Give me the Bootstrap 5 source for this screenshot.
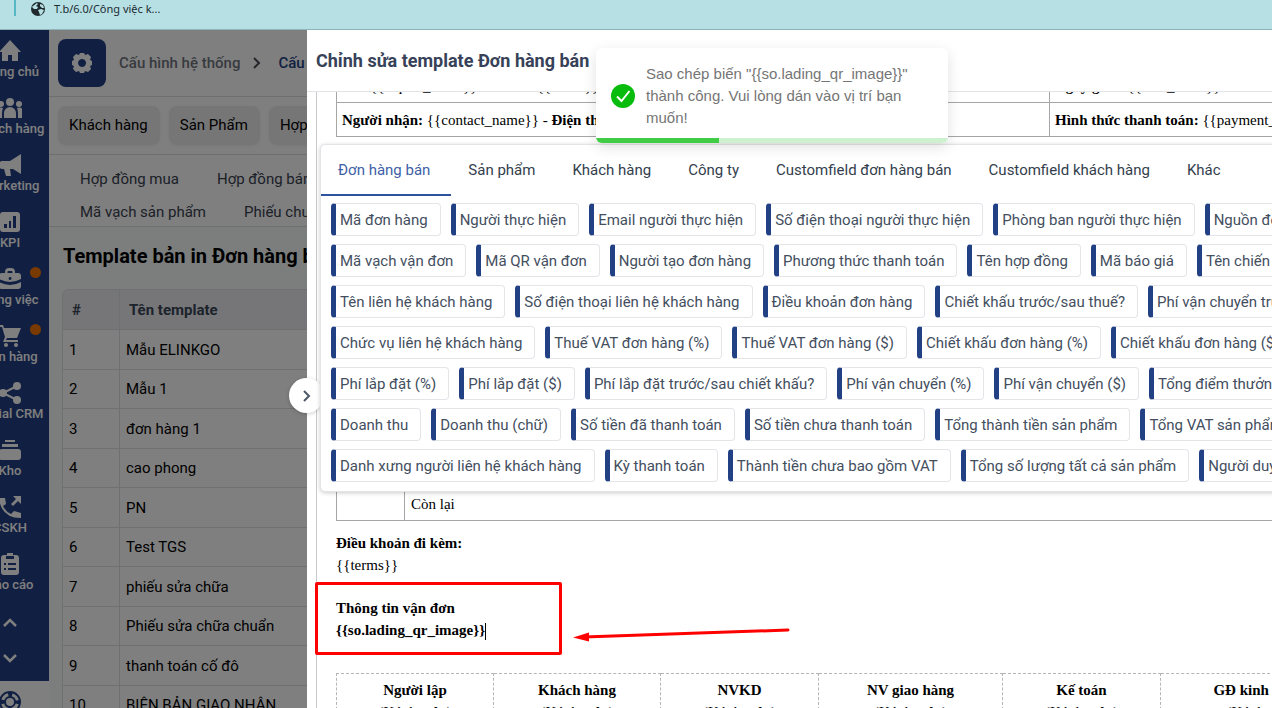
<!DOCTYPE html>
<html lang="vi">
<head>
<meta charset="utf-8">
<meta name="viewport" content="width=device-width, initial-scale=1">
<title>Chỉnh sửa template Đơn hàng bán</title>
<link href="https://cdn.jsdelivr.net/npm/bootstrap@5.3.0/dist/css/bootstrap.min.css" rel="stylesheet">
<style>
  :root { --navy: #224084; }
  body { font-family: Roboto, "Noto Sans", sans-serif; font-size: 15px; line-height: 22px; color: #000; }
  a { text-decoration: none; color: inherit; }
  .bookmarks { height: 30px; background: #b6e0e4; border-bottom: 1px solid #8fb3b8; font: 11px/18px "Noto Sans", sans-serif; color: #1b2a30; padding-left: 14px; gap: 14px; }
  .bookmarks .sep { width: 2px; height: 16px; background: #57b8c4; }
  .app { background: #f8fbfa; }

  .rail { width: 49px; }
  .rail-inner { width: 78px; }
  .rail-menu { background: var(--navy); color: #fff; padding-top: 9px; padding-bottom: 10px; }
  .rail-item { height: 57px; font-size: 13px; line-height: 18px; font-weight: 500; }
  .rail-item svg { width: 24px; height: 24px; fill: currentColor; }
  .rail-item .dot { position: absolute; right: 8px; top: 0; width: 11px; height: 11px; border-radius: 50%; background: #f07400; }
  .rail-arrows { gap: 8px; }
  .rail-btn { height: 27px; border: 0; background: none; color: #fff; padding: 0; line-height: 16px; }
  .rail-foot { padding-top: 9px; }

  .crumbs { height: 67px; padding: 0 9px; gap: 13px; font-size: 15px; font-weight: 500; color: #70757f; border-bottom: 1px solid #dcdee2; background: #fff; }
  .crumbs .here { color: var(--navy); }
  .gear { width: 48px; height: 48px; border-radius: 8px; background: var(--navy); }
  .pills { height: 58px; padding: 0 9px; gap: 9px; border-bottom: 1px solid #dcdee2; background: #fff; }
  .pill { height: 39px; border-radius: 8px; background: #ececec; padding: 0 12px 0 11px; font-size: 15px; line-height: 39px; border: 0; box-shadow: 0 1px 4px rgba(0,0,0,.06); }
  .submenu { height: 72px; padding: 8px 31px; border-bottom: 1px solid #dcdee2; background: #fff; color: #38414f; line-height: 33px; }
  .submenu > div { gap: 38px; }
  .page-title { font-size: 20px; line-height: 24px; font-weight: 700; margin: 17px 14px 21px 14px; }
  .list { margin-left: 13px; width: 600px; border-collapse: separate; border-spacing: 0; background: #fff; }
  .list th, .list td { border-bottom: 1px solid #dfe1e5; border-left: 1px solid #dfe1e5; padding: 0 6px; height: 40px; }
  .list th { background: #ecedf2; color: #3a4656; padding: 0 9px; border-top: 1px solid #dfe1e5; height: 41px; }
  .list th:first-child { border-top-left-radius: 6px; width: 57px; }
  .list tbody tr:nth-child(even) td { height: 39px; }

  .dim { position: absolute; inset: 30px 0 0 0; background: rgba(0,0,0,.5); }
  .drawer { position: absolute; top: 30px; right: 0; bottom: 0; left: 307px; background: #fff; }
  .drawer-head { height: 62px; padding-left: 9px; border-bottom: 1px solid #e2e4e8; }
  .drawer-head h2 { font-size: 18px; line-height: 24px; font-weight: 700; color: #374258; }
  .collapse-btn { position: absolute; left: -18px; top: 348px; width: 35px; height: 35px; border-radius: 50%; background: #fff; border: 0; box-shadow: 0 1px 4px rgba(0,0,0,.2); padding: 0; line-height: 14px; z-index: 1; }
  .doc { margin-left: 9px; border-left: 1px solid #c8cacd; padding-left: 19px; font: 15px/22px "Liberation Serif", serif; color: #000; }
  .doc table { width: 1130px; table-layout: fixed; border-collapse: collapse; }
  .info { margin-top: -24px; }
  .info td { height: 34px; border: 1px solid #a6a6a6; padding: 0 5px; }
  .goods { margin-top: 20px; }
  .goods td { border: 1px solid #a6a6a6; padding: 0 6px; height: 33px; }
  .goods .tall td { height: 330px; }
  .terms { margin-top: 11px; }
  .lading { margin-top: 21px; }
  .sign { margin-top: 32px; }
  .doc .sign { width: 1030px; }
  .sign td { border: 1px dashed #b5b5b5; padding: 5px 0; text-align: center; }
  .caret { display: inline-block; width: 1px; height: 17px; background: #000; vertical-align: middle; }

  .vars { position: absolute; left: 13px; top: 114px; width: 1100px; height: 348px; background: #fff; border: 1px solid #e2e4e8; border-radius: 5px; box-shadow: 0 1px 4px rgba(0,0,0,.2); z-index: 3; }
  .vars .tab { height: 51px; border: 0; border-bottom: 2px solid transparent; background: none; padding: 0 20px 0 17px; color: #333e4d; }
  .vars .tab.on { color: #3e5fa6; border-bottom-color: #2d529e; padding-right: 21px; }
  .chips { padding: 7px 10px; gap: 8px; }
  .chips > div { gap: 10px; }
  .chip { height: 33px; border: 1px solid #e3e5e9; border-left: 5px solid var(--navy); border-radius: 4px; background: #fff; color: #434e5e; padding: 0 12px 0 4px; }

  .note { position: absolute; z-index: 5; left: 596px; top: 48px; width: 352px; background: #fff; border-radius: 6px; box-shadow: 0 4px 14px rgba(0,0,0,.12); font: 15px/22px "Liberation Sans", sans-serif; color: #757575; }
  .note-text { gap: 11px; padding: 15px 20px 9px 15px; }
  .note-bar { height: 5px; background: #cdf1cf; }
  .note-bar div { height: 5px; background: #40cc44; }
  .mark-box { position: absolute; z-index: 4; left: 315px; top: 582px; width: 247px; height: 73px; border: 3px solid #f00; border-radius: 2px; }
  .mark-arrow { position: absolute; left: 572px; top: 624px; }
</style>
</head>
<body class="vh-100 overflow-hidden d-flex flex-column position-relative">

<header class="bookmarks d-flex flex-shrink-0">
  <span class="sep"></span>
  <a href="#" class="d-flex gap-2"><svg width="16" height="18" viewBox="0 0 16 18"><circle cx="8" cy="9" r="7" fill="#202a2e"/><path d="M3 6l4-3 1 1-2 2 2 1-1 2-3 0-2-2zM8 10l3-1 3 1-2 4-2 1-1-3zM10 4l3 1 1 3-2 0-2-2z" fill="#b6e0e4"/></svg><span>T.b/6.0/Công việc k...</span></a>
</header>

<div class="app d-flex flex-grow-1 overflow-hidden">
  <nav class="rail d-flex justify-content-end flex-shrink-0 overflow-hidden bg-white">
    <div class="rail-inner flex-shrink-0 text-center">
      <div class="rail-menu d-flex flex-column">
        <a href="#" class="rail-item"><svg viewBox="0 0 24 24"><path d="M10 22v-6h4v6h6v-9h3L12 1 1 13h3v9z"/></svg><div>Trang chủ</div></a>
        <a href="#" class="rail-item"><svg viewBox="0 0 24 24"><circle cx="12" cy="6" r="4"/><circle cx="3" cy="8" r="3"/><circle cx="21" cy="8" r="3"/><path d="M6 22v-5a6 6 0 0 1 12 0v5zM-1 22v-7a4 4 0 0 1 6-3Q4 14 4 17v5zM25 22v-7a4 4 0 0 0-6-3Q20 14 20 17v5z"/></svg><div>Khách hàng</div></a>
        <a href="#" class="rail-item"><svg viewBox="0 0 24 24"><path d="M23 1v20l-8-5h-3l1 7H8l-2-7H4a4 4 0 0 1-3-4c0-2 1-4 3-4h8z"/></svg><div>Marketing</div></a>
        <a href="#" class="rail-item"><svg viewBox="0 0 24 24"><path fill-rule="evenodd" d="M5 2h14a3 3 0 0 1 3 3v14a3 3 0 0 1-3 3H5a3 3 0 0 1-3-3V5a3 3 0 0 1 3-3zM6 14v4h3v-4zm5-3v7h2v-7zM15 6v12h3V6z"/></svg><div>KPI</div></a>
        <a href="#" class="rail-item position-relative"><svg viewBox="0 0 24 24"><path fill-rule="evenodd" d="M7 6V5a4 4 0 0 1 4-4h2a4 4 0 0 1 4 4v1h3a3 3 0 0 1 3 3v3q-11 6-22 0V9a3 3 0 0 1 3-3zm2.500 0h5V5q0-1-1-1h-3q-1 0-1 1zM12 10a1.500 1.500 0 1 0 .1 3 1.500 1.500 0 0 0-.1-3zM1 15q11 6 22 0v4a3 3 0 0 1-3 3H4a3 3 0 0 1-3-3z"/></svg><span class="dot"></span><div>Công việc</div></a>
        <a href="#" class="rail-item position-relative"><svg viewBox="0 0 24 24"><circle cx="8" cy="21" r="2"/><circle cx="18" cy="21" r="2"/><path d="M1 1h4l1 3h17l-4 10H9l-1 2h12v2H5l2-5-3-10H1z"/></svg><span class="dot"></span><div>Đơn hàng</div></a>
        <a href="#" class="rail-item"><svg viewBox="0 0 24 24"><path d="M19 5L5 12l14 7" fill="none" stroke="currentColor" stroke-width="2"/><circle cx="19" cy="5" r="4"/><circle cx="5" cy="12" r="4"/><circle cx="19" cy="19" r="4"/></svg><div>Social CRM</div></a>
        <a href="#" class="rail-item"><svg viewBox="0 0 24 24"><path d="M7 2h10v2H7zM4 6h16v3H4zM4 11h16a3 3 0 0 1 3 3v5a3 3 0 0 1-3 3H4a3 3 0 0 1-3-3v-5a3 3 0 0 1 3-3z"/></svg><div>Kho</div></a>
        <a href="#" class="rail-item"><svg viewBox="0 0 24 24"><path d="M1 3h6l1 6-3 2q3 6 8 8l3-3 7 2v5Q3 23 1 3zM15 1h8v8l-3-3-5 5-2-2 5-5z"/></svg><div>CSKH</div></a>
        <a href="#" class="rail-item"><svg viewBox="0 0 24 24"><path fill-rule="evenodd" d="M9 3V1h6v2h3a3 3 0 0 1 3 3v14a3 3 0 0 1-3 3H6a3 3 0 0 1-3-3V6a3 3 0 0 1 3-3zM8 4v3h8V4zM6 11v2h2v-2zm4 0v2h8v-2zM6 16v2h2v-2zm4 0v2h8v-2z"/></svg><div>Báo cáo</div></a>
        <div class="rail-arrows d-flex flex-column">
          <button class="rail-btn" aria-label="Lên"><svg width="16" height="16" viewBox="0 0 16 16"><path d="M2 11l6-6 6 6" fill="none" stroke="currentColor" stroke-width="2.500"/></svg></button>
          <button class="rail-btn" aria-label="Xuống"><svg width="16" height="16" viewBox="0 0 16 16"><path d="M2 5l6 6 6-6" fill="none" stroke="currentColor" stroke-width="2.500"/></svg></button>
        </div>
      </div>
      <div class="rail-foot"><svg width="24" height="24" viewBox="0 0 24 24" fill="none" stroke="#224084"><circle cx="12" cy="12" r="7.500" stroke-width="7"/><circle cx="12" cy="12" r="7.500" stroke="#fff" stroke-width="3" stroke-dasharray="7.780 4" stroke-dashoffset="-2"/></svg></div>
    </div>
  </nav>

  <main class="flex-grow-1 overflow-hidden">
    <div class="crumbs d-flex align-items-center text-nowrap">
      <span class="gear d-flex align-items-center justify-content-center"><svg width="24" height="24" viewBox="0 0 24 24" fill="#fff"><path fill-rule="evenodd" d="M10 2h4l1 2 3-1 3 3-1 3 2 1v4l-2 1 1 3-3 3-3-1-1 2h-4l-1-2-3 1-3-3 1-3-2-1v-4l2-1-1-3 3-3 3 1zM12 8a4 4 0 1 0 .1 0z"/></svg></span>
      <a href="#">Cấu hình hệ thống</a>
      <svg width="8" height="12" viewBox="0 0 8 12"><path d="M1 1l5 5-5 5" fill="none" stroke="#4a4f58" stroke-width="2"/></svg>
      <a href="#" class="ms-1 here">Cấu hình chung</a>
    </div>
    <div class="pills d-flex align-items-center text-nowrap">
      <button class="pill">Khách hàng</button><button class="pill">Sản Phẩm</button><button class="pill">Hợp đồng</button>
    </div>
    <div class="submenu text-nowrap">
      <div class="d-flex"><a href="#">Hợp đồng mua</a><a href="#">Hợp đồng bán</a></div>
      <div class="d-flex"><a href="#">Mã vạch sản phẩm</a><a href="#">Phiếu chuyển kho</a></div>
    </div>
    <h1 class="page-title text-nowrap">Template bản in Đơn hàng bán</h1>
    <table class="list">
      <thead><tr><th>#</th><th>Tên template</th></tr></thead>
      <tbody>
        <tr><td>1</td><td>Mẫu ELINKGO</td></tr>
        <tr><td>2</td><td>Mẫu 1</td></tr>
        <tr><td>3</td><td>đơn hàng 1</td></tr>
        <tr><td>4</td><td>cao phong</td></tr>
        <tr><td>5</td><td>PN</td></tr>
        <tr><td>6</td><td>Test TGS</td></tr>
        <tr><td>7</td><td>phiếu sửa chữa</td></tr>
        <tr><td>8</td><td>Phiếu sửa chữa chuẩn</td></tr>
        <tr><td>9</td><td>thanh toán cố đô</td></tr>
        <tr><td>10</td><td>BIÊN BẢN GIAO NHẬN</td></tr>
      </tbody>
    </table>
  </main>
</div>

<div class="dim"></div>

<section class="drawer d-flex flex-column">
  <div class="drawer-head d-flex align-items-center flex-shrink-0"><h2 class="m-0">Chỉnh sửa template Đơn hàng bán</h2></div>
  <button class="collapse-btn" aria-label="Đóng"><svg width="10" height="14" viewBox="0 0 10 14"><path d="M2 2l5 5-5 5" fill="none" stroke="#4d5866" stroke-width="2"/></svg></button>
  <div class="overflow-hidden flex-grow-1 d-flex flex-column">
    <div class="doc flex-grow-1">
      <table class="info">
        <colgroup><col style="width:713px"><col></colgroup>
        <tr><td><b>Tel:</b> {{export_name}} - <b>Email:</b> {{email}}</td><td><b>Ngày giao:</b> {{date_order}}</td></tr>
        <tr><td><b>Người nhận:</b> {{contact_name}} - <b>Điện thoại:</b> {{phone}}</td><td><b>Hình thức thanh toán:</b> {{payment_method}}</td></tr>
      </table>
      <table class="goods">
        <colgroup><col style="width:68px"><col></colgroup>
        <tr class="tall"><td></td><td></td></tr>
        <tr><td></td><td>Còn lại</td></tr>
      </table>
      <div class="terms"><b>Điều khoản đi kèm:</b></div>
      <div>{{terms}}</div>
      <div class="lading"><b>Thông tin vận đơn</b></div>
      <div><b>{{so.lading_qr_image}}</b><span class="caret"></span></div>
      <table class="sign">
        <colgroup><col style="width:157px"><col style="width:167px"><col style="width:158px"><col style="width:184px"><col style="width:158px"><col></colgroup>
        <tr>
          <td><b>Người lập</b><br>(Ký, họ tên)</td><td><b>Khách hàng</b><br>(Ký, họ tên)</td><td><b>NVKD</b><br>(Ký, họ tên)</td><td><b>NV giao hàng</b><br>(Ký, họ tên)</td><td><b>Kế toán</b><br>(Ký, họ tên)</td><td><b>GĐ kinh doanh</b><br>(Ký, họ tên)</td>
        </tr>
      </table>
    </div>
  </div>

  <div class="vars text-nowrap">
    <div class="d-flex">
      <button class="tab on">Đơn hàng bán</button><button class="tab">Sản phẩm</button><button class="tab">Khách hàng</button><button class="tab">Công ty</button><button class="tab">Customfield đơn hàng bán</button><button class="tab">Customfield khách hàng</button><button class="tab">Khác</button>
    </div>
    <div class="chips d-flex flex-column">
      <div class="d-flex"><button class="chip">Mã đơn hàng</button><button class="chip">Người thực hiện</button><button class="chip">Email người thực hiện</button><button class="chip">Số điện thoại người thực hiện</button><button class="chip">Phòng ban người thực hiện</button><button class="chip">Nguồn đơn hàng</button></div>
      <div class="d-flex"><button class="chip">Mã vạch vận đơn</button><button class="chip">Mã QR vận đơn</button><button class="chip">Người tạo đơn hàng</button><button class="chip">Phương thức thanh toán</button><button class="chip">Tên hợp đồng</button><button class="chip">Mã báo giá</button><button class="chip">Tên chiến dịch</button></div>
      <div class="d-flex"><button class="chip">Tên liên hệ khách hàng</button><button class="chip">Số điện thoại liên hệ khách hàng</button><button class="chip">Điều khoản đơn hàng</button><button class="chip">Chiết khấu trước/sau thuế?</button><button class="chip">Phí vận chuyển trước</button></div>
      <div class="d-flex"><button class="chip">Chức vụ liên hệ khách hàng</button><button class="chip">Thuế VAT đơn hàng (%)</button><button class="chip">Thuế VAT đơn hàng ($)</button><button class="chip">Chiết khấu đơn hàng (%)</button><button class="chip">Chiết khấu đơn hàng ($)</button></div>
      <div class="d-flex"><button class="chip">Phí lắp đặt (%)</button><button class="chip">Phí lắp đặt ($)</button><button class="chip">Phí lắp đặt trước/sau chiết khấu?</button><button class="chip">Phí vận chuyển (%)</button><button class="chip">Phí vận chuyển ($)</button><button class="chip">Tổng điểm thưởng</button></div>
      <div class="d-flex"><button class="chip">Doanh thu</button><button class="chip">Doanh thu (chữ)</button><button class="chip">Số tiền đã thanh toán</button><button class="chip">Số tiền chưa thanh toán</button><button class="chip">Tổng thành tiền sản phẩm</button><button class="chip">Tổng VAT sản phẩm</button></div>
      <div class="d-flex"><button class="chip">Danh xưng người liên hệ khách hàng</button><button class="chip">Kỳ thanh toán</button><button class="chip">Thành tiền chưa bao gồm VAT</button><button class="chip">Tổng số lượng tất cả sản phẩm</button><button class="chip">Người duyệt</button></div>
    </div>
  </div>
</section>

<div class="note overflow-hidden" role="status">
  <div class="note-text d-flex align-items-center">
    <svg class="flex-shrink-0" width="24" height="24" viewBox="0 0 24 24"><circle cx="12" cy="12" r="12" fill="#07bc0c"/><path d="M6 12.500l4.500 4.500L18.500 7" fill="none" stroke="#fff" stroke-width="2"/></svg>
    <div>Sao chép biến "{{so.lading_qr_image}}" thành công. Vui lòng dán vào vị trí bạn muốn!</div>
  </div>
  <div class="note-bar"><div style="width:35%"></div></div>
</div>

<div class="mark-box"></div>
<svg class="mark-arrow" width="220" height="24" viewBox="0 0 220 24"><path d="M12 13L216 6" stroke="#f00" stroke-width="3" stroke-linecap="round"/><path d="M1 13.500L17 8.500v9z" fill="#f00"/></svg>

<script src="https://cdn.jsdelivr.net/npm/bootstrap@5.3.0/dist/js/bootstrap.bundle.min.js"></script>
</body>
</html>
